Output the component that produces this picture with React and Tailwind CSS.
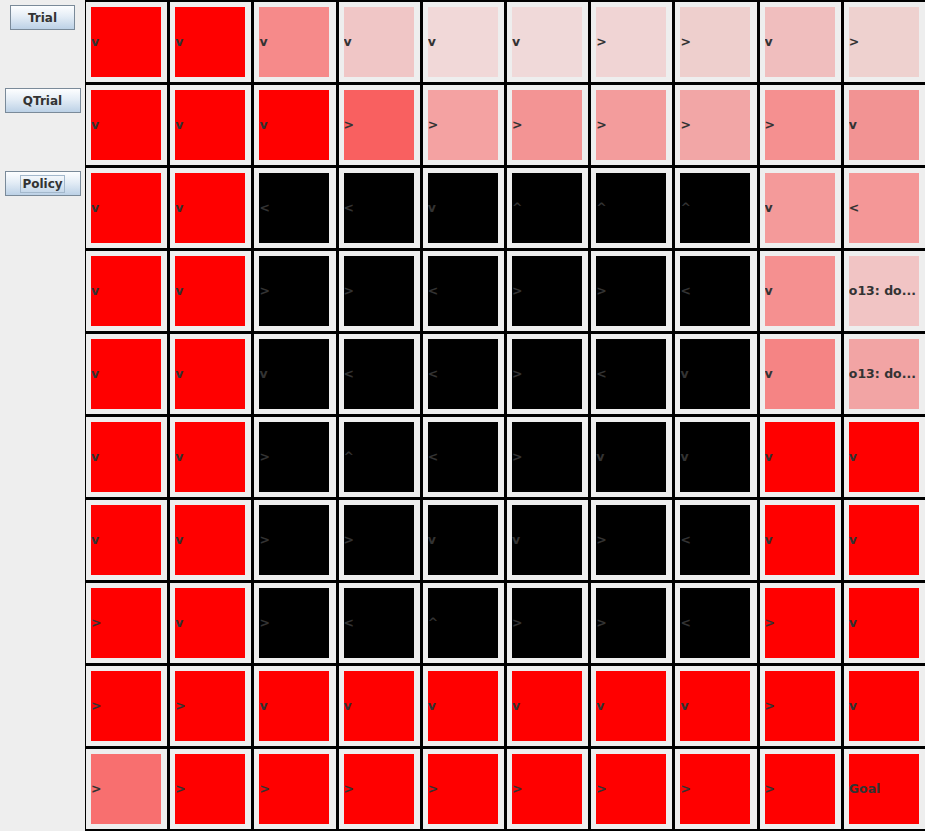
const R = '#ff0000';
const K = '#000000';

// [colour, label] per cell, row by row
const grid = [
  [[R, 'v'], [R, 'v'], ['#f68a8a', 'v'], ['#f0c6c6', 'v'], ['#f1d8d8', 'v'], ['#f0d9d9', 'v'], ['#f0d4d4', '>'], ['#eecfcd', '>'], ['#f0bebe', 'v'], ['#eed1cf', '>']],
  [[R, 'v'], [R, 'v'], [R, 'v'], ['#f96060', '>'], ['#f4a2a2', '>'], ['#f39494', '>'], ['#f39c9c', '>'], ['#f2a6a6', '>'], ['#f59090', '>'], ['#f29393', 'v']],
  [[R, 'v'], [R, 'v'], [K, '<'], [K, '<'], [K, 'v'], [K, '^'], [K, '^'], [K, '^'], ['#f49a9a', 'v'], ['#f49797', '<']],
  [[R, 'v'], [R, 'v'], [K, '>'], [K, '>'], [K, '<'], [K, '>'], [K, '>'], [K, '<'], ['#f59090', 'v'], ['#f1c4c4', 'o13: do...']],
  [[R, 'v'], [R, 'v'], [K, 'v'], [K, '<'], [K, '<'], [K, '>'], [K, '<'], [K, 'v'], ['#f58484', 'v'], ['#f2a4a4', 'o13: do...']],
  [[R, 'v'], [R, 'v'], [K, '>'], [K, '^'], [K, '<'], [K, '>'], [K, 'v'], [K, 'v'], [R, 'v'], [R, 'v']],
  [[R, 'v'], [R, 'v'], [K, '>'], [K, '>'], [K, 'v'], [K, 'v'], [K, '>'], [K, '<'], [R, 'v'], [R, 'v']],
  [[R, '>'], [R, 'v'], [K, '>'], [K, '<'], [K, '^'], [K, '>'], [K, '>'], [K, '<'], [R, '>'], [R, 'v']],
  [[R, '>'], [R, '>'], [R, 'v'], [R, 'v'], [R, 'v'], [R, 'v'], [R, 'v'], [R, 'v'], [R, '>'], [R, 'v']],
  [['#f86f6f', '>'], [R, '>'], [R, '>'], [R, '>'], [R, '>'], [R, '>'], [R, '>'], [R, '>'], [R, '>'], [R, 'Goal']],
];

const buttons = [
  { label: 'Trial', width: 'w-[65px]' },
  { label: 'QTrial', width: 'w-[76px]' },
  { label: 'Policy', width: 'w-[76px]', focused: true },
];

function SwingButton({ label, width, focused }) {
  return (
    <button
      className={`${width} h-[25px] flex items-center justify-center border border-[#7a8a99] bg-[linear-gradient(to_bottom,#fdfeff,#e4edf6_45%,#bcd1e6)] text-[12px] font-bold text-[#333333]`}
    >
      <span className={focused ? 'px-[1px] leading-[16px] border border-[#a3b8cc]' : 'leading-[16px]'}>
        {label}
      </span>
    </button>
  );
}

export default function App() {
  return (
    <div className="w-[925px] h-[831px] flex bg-[#eeeeee] overflow-hidden font-['DejaVu_Sans',sans-serif]">
      {/* Controls */}
      <div className="w-[85px] shrink-0 flex flex-col">
        {buttons.map((b) => (
          <div key={b.label} className="h-[83px] pt-[5px] flex justify-center">
            <SwingButton {...b} />
          </div>
        ))}
      </div>

      {/* Grid world */}
      <div className="flex-1 h-[831px] bg-black pt-[2px] pl-[1px] pb-[2px] grid grid-cols-10 grid-rows-10 gap-[3px]">
        {grid.flat().map(([color, label], i) => (
          <div key={i} className="bg-[#eeeeee] flex items-center pl-[5px]">
            <div
              className="w-[70px] h-[70px] flex items-center overflow-hidden whitespace-nowrap text-[12.5px] font-bold text-[#333333] leading-none"
              style={{ backgroundColor: color }}
            >
              {label}
            </div>
          </div>
        ))}
      </div>
    </div>
  );
}
